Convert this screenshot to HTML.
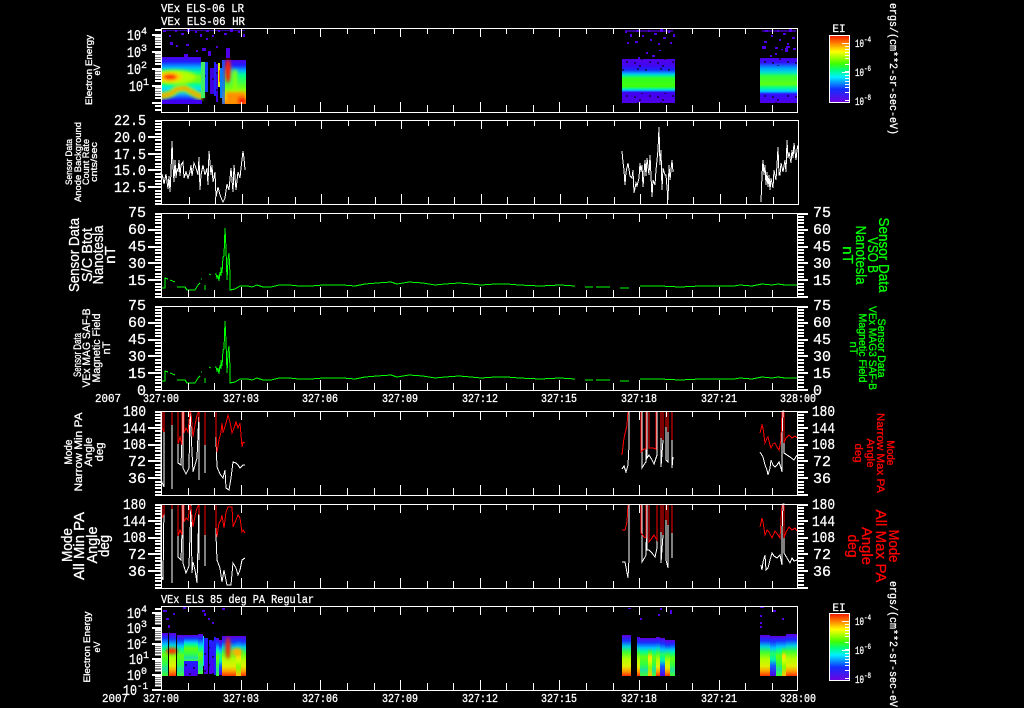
<!DOCTYPE html>
<html><head><meta charset="utf-8"><title>VEx ELS</title>
<style>
html,body{margin:0;padding:0;background:#000;width:1024px;height:708px;overflow:hidden}
svg{display:block}
path{shape-rendering:crispEdges}
text{font-family:"Liberation Sans",sans-serif;fill:#fff;stroke:#fff;stroke-width:.3}
.m{font-family:"Liberation Mono",monospace}
.g{fill:#0f0;stroke:#0f0}
.r{fill:#f00;stroke:#f00}
</style></head><body>
<svg width="1024" height="708" viewBox="0 0 1024 708" xmlns="http://www.w3.org/2000/svg">
<defs>
<linearGradient id="cb" x1="0" y1="0" x2="0" y2="1">
<stop offset="0" stop-color="#f01800"/><stop offset=".1" stop-color="#ff7000"/><stop offset=".24" stop-color="#ffff00"/><stop offset=".42" stop-color="#40ff00"/><stop offset=".52" stop-color="#00ff80"/><stop offset=".62" stop-color="#00f0ff"/><stop offset=".8" stop-color="#1030ff"/><stop offset="1" stop-color="#7000e0"/>
</linearGradient>
<linearGradient id="a1" x1="0" y1="0" x2="0" y2="1">
<stop offset="0" stop-color="#5000e8"/><stop offset=".1" stop-color="#2020ff"/><stop offset=".22" stop-color="#00b0ff"/><stop offset=".32" stop-color="#00ff90"/><stop offset=".42" stop-color="#70ff10"/><stop offset=".52" stop-color="#60ff20"/><stop offset=".6" stop-color="#00ffa0"/><stop offset=".68" stop-color="#00e0ff"/><stop offset=".8" stop-color="#10a0ff"/><stop offset=".9" stop-color="#2020ff"/><stop offset="1" stop-color="#5000e8"/>
</linearGradient>
<linearGradient id="a2" x1="0" y1="0" x2="0" y2="1">
<stop offset="0" stop-color="#5000e8"/><stop offset=".12" stop-color="#2020ff"/><stop offset=".24" stop-color="#00b0ff"/><stop offset=".34" stop-color="#00ff90"/><stop offset=".6" stop-color="#60ff20"/><stop offset=".75" stop-color="#b0ff00"/><stop offset=".88" stop-color="#ffe000"/><stop offset="1" stop-color="#ff8000"/>
</linearGradient>
<linearGradient id="b2" x1="0" y1="0" x2="0" y2="1">
<stop offset="0" stop-color="#5000e8"/><stop offset=".16" stop-color="#4008f0"/><stop offset=".25" stop-color="#1828ff"/><stop offset=".33" stop-color="#00b0ff"/><stop offset=".38" stop-color="#00f0a0"/><stop offset=".44" stop-color="#30ff20"/><stop offset=".63" stop-color="#40ff10"/><stop offset=".67" stop-color="#00ff90"/><stop offset=".71" stop-color="#00c0ff"/><stop offset=".76" stop-color="#4000f0"/><stop offset="1" stop-color="#5000e8"/>
</linearGradient>
<linearGradient id="b3" x1="0" y1="0" x2="0" y2="1">
<stop offset="0" stop-color="#5000e8"/><stop offset=".1" stop-color="#3010f8"/><stop offset=".22" stop-color="#00a0ff"/><stop offset=".32" stop-color="#00e0d0"/><stop offset=".40" stop-color="#30ff40"/><stop offset=".58" stop-color="#60ff10"/><stop offset=".66" stop-color="#00ff90"/><stop offset=".74" stop-color="#00d0ff"/><stop offset=".8" stop-color="#3010ff"/><stop offset="1" stop-color="#5000e8"/>
</linearGradient>
<linearGradient id="c1" x1="0" y1="0" x2="0" y2="1">
<stop offset="0" stop-color="#6000e0"/><stop offset=".12" stop-color="#1830ff"/><stop offset=".26" stop-color="#00c0ff"/><stop offset=".36" stop-color="#00ff90"/><stop offset=".5" stop-color="#60ff10"/><stop offset=".7" stop-color="#30ff40"/><stop offset=".84" stop-color="#20e0a0"/><stop offset="1" stop-color="#40ff30"/>
</linearGradient>
<linearGradient id="c2" x1="0" y1="0" x2="0" y2="1">
<stop offset="0" stop-color="#6000e0"/><stop offset=".14" stop-color="#1830ff"/><stop offset=".28" stop-color="#00d0e0"/><stop offset=".42" stop-color="#40ff30"/><stop offset=".58" stop-color="#b0ff00"/><stop offset=".76" stop-color="#e0f000"/><stop offset=".88" stop-color="#ffa000"/><stop offset="1" stop-color="#ff3000"/>
</linearGradient>
<linearGradient id="c3" x1="0" y1="0" x2="0" y2="1">
<stop offset="0" stop-color="#6000e0"/><stop offset=".14" stop-color="#1830ff"/><stop offset=".3" stop-color="#00c0ff"/><stop offset=".44" stop-color="#20ff60"/><stop offset=".6" stop-color="#00f0b0"/><stop offset=".74" stop-color="#1060ff"/><stop offset="1" stop-color="#5000e8"/>
</linearGradient>
<linearGradient id="c4" x1="0" y1="0" x2="0" y2="1">
<stop offset="0" stop-color="#6000e0"/><stop offset=".12" stop-color="#1830ff"/><stop offset=".26" stop-color="#00c0ff"/><stop offset=".38" stop-color="#40ff20"/><stop offset=".5" stop-color="#ffe000"/><stop offset=".62" stop-color="#d0ff00"/><stop offset=".78" stop-color="#80ff00"/><stop offset="1" stop-color="#ffc000"/>
</linearGradient>
<linearGradient id="c5" x1="0" y1="0" x2="0" y2="1">
<stop offset="0" stop-color="#2020ff"/><stop offset=".4" stop-color="#3010ff"/><stop offset="1" stop-color="#5000e8"/>
</linearGradient>
<pattern id="sp" width="43" height="23" patternUnits="userSpaceOnUse">
<path fill="#5000e8" d="M1 1h3v2h-3zM7 3h2v3h-2zM12 0h4v2h-4zM19 2h3v3h-3zM26 1h2v2h-2zM31 0h4v3h-4zM39 4h3v2h-3zM3 7h2v2h-2zM15 6h3v3h-3zM23 8h2v2h-2zM34 7h3v2h-3zM9 10h3v2h-3zM28 11h2v3h-2zM40 12h2v2h-2zM18 14h3v2h-3zM5 16h2v2h-2zM33 18h3v2h-3zM13 20h2v2h-2zM25 19h2v2h-2z"/>
</pattern>
<pattern id="bk" width="23" height="17" patternUnits="userSpaceOnUse">
<path fill="#000" fill-opacity=".55" d="M1 1h2v2h-2zM9 4h2v2h-2zM16 0h2v2h-2zM20 7h2v2h-2zM5 10h2v2h-2zM13 11h2v2h-2zM18 14h2v2h-2z"/>
</pattern>
<filter id="bl" x="-50%" y="-50%" width="200%" height="200%"><feGaussianBlur stdDeviation="1.6"/></filter>
<clipPath id="cA"><rect x="162" y="57" width="84" height="47"/></clipPath>
<path id="xt" fill="none" stroke="#fff" d="M188.5 0v6M214.5 0v6M267.5 0v6M294.5 0v6M347.5 0v6M374.5 0v6M427.5 0v6M453.5 0v6M506.5 0v6M533.5 0v6M586.5 0v6M613.5 0v6M666.5 0v6M692.5 0v6M745.5 0v6M772.5 0v6M241.5 0v9M320.5 0v9M400.5 0v9M480.5 0v9M559.5 0v9M639.5 0v9M719.5 0v9M188.5 84v-7M214.5 84v-7M267.5 84v-7M294.5 84v-7M347.5 84v-7M374.5 84v-7M427.5 84v-7M453.5 84v-7M506.5 84v-7M533.5 84v-7M586.5 84v-7M613.5 84v-7M666.5 84v-7M692.5 84v-7M745.5 84v-7M772.5 84v-7M241.5 84v-10M320.5 84v-10M400.5 84v-10M480.5 84v-10M559.5 84v-10M639.5 84v-10M719.5 84v-10"/>
<path id="cl" fill="none" stroke="#fff" stroke-width="2" d="M155 1h6M155 4h6M155 7h6M155 10h6M155 14h6M155 20h6M155 24h6M155 27h6M155 30h6M155 37h6M155 40h6M155 44h6M155 47h6M155 54h6M155 57h6M155 61h6M155 64h6M155 71h6M155 74h6M155 77h6M155 81h6M155 84h6M148 17h13M148 34h13M148 50h13M148 67h13"/>
<path id="cr" fill="none" stroke="#fff" stroke-width="2" d="M797 1h7M797 4h7M797 7h7M797 10h7M797 14h7M797 20h7M797 24h7M797 27h7M797 30h7M797 37h7M797 40h7M797 44h7M797 47h7M797 54h7M797 57h7M797 61h7M797 64h7M797 71h7M797 74h7M797 77h7M797 81h7M797 84h7M797 17h11M797 34h11M797 50h11M797 67h11M797 1h11M797 84h11"/>
<path id="dec" fill="none" stroke="#fff" stroke-width="2" d="M152 0h9M155 -5h6M155 -8h6M155 -10.5h6M155 -13h6M155 -15.5h6"/>
<path id="grn" fill="none" stroke="#00ff00" d="M162 288H165V278L168 279M170 280L175 282M177 287H185L187 290H195L198 285 200 283M201 279H202M205 285V290M209 274L211 275M215 274H216L217 278 218 275 219 281 220 272 221 276V267L222 273 223 257 224 256 225 228 226 248 227 280 228 260 229 253 230 275V290L235 289 240 286H248L252 287 257 285 263 287H271L279 285H289L299 286H311L323 285H343L355 286 365 284 377 283 391 282 397 284 409 282 423 283 435 285 445 284 459 283 471 284 481 285 495 284H507L519 285 540 286 560 285 575 286M585 287H593M596 287H610M620 288H629M640 286H660L680 287 700 286H720L734 286 740 285 752 286 762 284 772 285 778 284 785 285 797 285"/>
<g id="cbt"><path fill="none" stroke="#fff" d="M842 8.5h7M845 11.5h4M845 14.5h4M845 17.5h4M845 20.5h4M845 23.5h4M845 29.5h4M845 36.5h4M842 37.5h7M845 40.5h4M845 43.5h4M845 46.5h4M845 49.5h4M845 52.5h4M845 57.5h4M845 65.5h4"/></g>
</defs>

<!-- top titles -->
<text x="161" y="12" font-size="12" textLength="83" lengthAdjust="spacingAndGlyphs" class="m">VEx ELS-06 LR</text>
<text x="161" y="25" font-size="12" textLength="84" lengthAdjust="spacingAndGlyphs" class="m">VEx ELS-06 HR</text>
<text x="161" y="603" font-size="12" textLength="153" lengthAdjust="spacingAndGlyphs" class="m">VEx ELS 85 deg PA Regular</text>

<!-- panel 1 spectrogram -->
<g clip-path="url(#cA)">
<rect x="162" y="57" width="39" height="47" fill="url(#a1)"/>
<g filter="url(#bl)">
<ellipse cx="174" cy="77" rx="22" ry="7" fill="#b0ff00"/>
<ellipse cx="170" cy="77" rx="12" ry="5" fill="#ffd000"/>
<ellipse cx="170" cy="77" rx="7" ry="3" fill="#ff2000"/>
<path style="shape-rendering:auto" d="M160 96L167 95 172 93 177 89 185 88 192 92 197 95 203 97" fill="none" stroke="#a0ff00" stroke-width="7"/>
<path style="shape-rendering:auto" d="M160 96L167 95 172 93 177 89 185 88 192 92 197 95 203 97" fill="none" stroke="#ff8000" stroke-width="3"/>
</g>
<rect x="162" y="100" width="40" height="4" fill="#4000f0"/>
<rect x="201" y="62" width="4" height="36" fill="#40f060"/>
<rect x="205" y="62" width="3" height="30" fill="#1040ff"/>
<rect x="210" y="68" width="4" height="26" fill="#4000e0"/>
<rect x="214" y="62" width="2" height="34" fill="#2020ff"/>
<rect x="216" y="64" width="2" height="38" fill="#4000e0"/>
<rect x="205" y="60" width="13" height="44" fill="url(#bk)"/>
<rect x="218" y="63" width="2" height="24" fill="#e0f000"/>
<rect x="219" y="70" width="1" height="12" fill="#ff4000"/>
<rect x="220" y="68" width="2" height="30" fill="#0080ff"/>
<rect x="222" y="60" width="24" height="44" fill="url(#a2)"/>
<rect x="222" y="60" width="3" height="44" fill="#1060ff" opacity=".8"/>
<g filter="url(#bl)">
<rect x="226" y="92" width="20" height="12" fill="#ff9000"/>
<rect x="238" y="97" width="8" height="7" fill="#ff2000"/>
<ellipse cx="228" cy="71" rx="3" ry="12" fill="#ff2000"/>
<rect x="233" y="70" width="4" height="20" fill="#90ff00"/>
</g>
</g>
<path d="M226 48h4v10h-4zM170 42h3v3h-3zM176 45h2v2h-2zM186 44h3v2h-3zM196 50h2v2h-2zM202 48h4v3h-4zM208 51h3v5h-3zM216 46h2v2h-2zM184 54h4v3h-4zM206 38h2v2h-2z" fill="#5000e8"/>
<rect x="162" y="29" width="84" height="8" fill="url(#sp)"/>
<path d="M163 30h82v1h-82z" fill="#5000e8" opacity=".7"/>
<rect x="622" y="59" width="53" height="44" fill="url(#b2)"/>
<rect x="622" y="59" width="53" height="12" fill="url(#bk)"/>
<rect x="622" y="93" width="53" height="10" fill="url(#bk)"/>
<rect x="623" y="29" width="52" height="16" fill="url(#sp)"/>
<path d="M625 30h48v2h-48z" fill="#5000e8" opacity=".6"/>
<path d="M646 52h2v2h-2zM659 50h2v1h-2zM638 57h2v2h-2zM652 55h3v2h-3z" fill="#5000e8"/>
<rect x="760" y="58" width="37" height="45" fill="url(#b3)"/>
<rect x="760" y="58" width="37" height="8" fill="url(#bk)"/>
<rect x="760" y="94" width="37" height="9" fill="url(#bk)"/>
<rect x="761" y="29" width="36" height="21" fill="url(#sp)"/>
<path d="M762 30h34v2h-34z" fill="#5000e8" opacity=".6"/>
<path d="M785 48h3v4h-3zM770 55h2v2h-2zM775 53h2v2h-2z" fill="#5000e8"/>

<!-- panel 7 spectrogram -->
<rect x="162" y="633" width="6" height="43" fill="url(#c1)"/>
<rect x="169" y="633" width="7" height="43" fill="url(#c2)"/>
<rect x="177" y="635" width="7" height="41" fill="url(#c1)"/>
<rect x="184" y="635" width="14" height="27" fill="url(#c1)"/>
<rect x="184" y="661" width="14" height="15" fill="url(#c5)"/>
<rect x="184" y="661" width="14" height="15" fill="url(#bk)"/>
<rect x="198" y="634" width="5" height="40" fill="url(#c1)"/>
<rect x="203" y="636" width="1" height="30" fill="#00d0ff"/>
<rect x="204" y="638" width="4" height="36" fill="url(#c5)"/>
<rect x="209" y="640" width="5" height="34" fill="url(#c5)"/>
<rect x="204" y="638" width="10" height="36" fill="url(#bk)"/>
<rect x="214" y="637" width="2" height="38" fill="#2020ff"/>
<rect x="216" y="638" width="3" height="38" fill="url(#c1)"/>
<rect x="219" y="640" width="3" height="35" fill="url(#c3)"/>
<rect x="222" y="636" width="14" height="40" fill="url(#c2)"/>
<rect x="236" y="636" width="5" height="40" fill="url(#c4)"/>
<rect x="241" y="636" width="5" height="40" fill="url(#c2)"/>
<g filter="url(#bl)">
<ellipse cx="172" cy="651" rx="6" ry="3" fill="#ff3000"/>
<ellipse cx="228" cy="648" rx="2.5" ry="11" fill="#ff2000"/>
<ellipse cx="237" cy="652" rx="5" ry="4" fill="#ffb000"/>
</g>
<rect x="168" y="635" width="1" height="41" fill="#000"/>
<rect x="176" y="634" width="1" height="42" fill="#000"/>
<path d="M163 610h4v2h-4zM168 625h2v3h-2zM166 618h3v2h-3zM173 613h2v2h-2zM183 607h3v2h-3zM202 610h3v2h-3zM204 613h2v3h-2zM208 618h2v2h-2zM212 622h2v2h-2zM222 608h3v2h-3z" fill="#5000e8"/>
<rect x="622" y="635" width="9" height="41" fill="url(#c2)"/>
<rect x="637" y="637" width="3" height="39" fill="url(#c2)"/>
<rect x="640" y="638" width="8" height="38" fill="url(#c1)"/>
<rect x="648" y="638" width="4" height="38" fill="url(#c4)"/>
<rect x="652" y="638" width="4" height="38" fill="url(#c1)"/>
<rect x="656" y="637" width="4" height="39" fill="url(#c2)"/>
<rect x="660" y="638" width="5" height="38" fill="url(#c3)"/>
<rect x="665" y="640" width="5" height="36" fill="url(#c2)"/>
<rect x="670" y="640" width="5" height="36" fill="url(#c1)"/>
<rect x="760" y="635" width="10" height="41" fill="url(#c2)"/>
<rect x="770" y="636" width="6" height="40" fill="url(#c3)"/>
<rect x="776" y="636" width="6" height="40" fill="url(#c1)"/>
<rect x="782" y="636" width="4" height="40" fill="url(#c4)"/>
<rect x="786" y="634" width="11" height="42" fill="url(#c2)"/>
<path d="M628 608h3v1h-3zM640 618h2v2h-2zM658 614h2v2h-2zM660 608h2v2h-2zM670 610h2v4h-2zM760 607h4v1h-4zM760 615h2v2h-2zM760 622h2v2h-2zM760 626h2v2h-2zM773 610h3v2h-3zM782 618h2v2h-2z" fill="#5000e8"/>

<!-- panel 2 line -->
<path fill="none" stroke="#fff" d="M161 172L163 178 164 184 166 174 168 189 169 176 170 192 171 172 172 141 173 165 174 182 175 160 176 178 177 168 178 172 179 160 180 176 181 165 183 162 184 178 186 172 188 178 190 172 191 165 192 176 194 163 196 168 198 175 199 157 200 190 201 175 203 165 205 175 207 168 208 185 209 151 211 175 212 165 213 182 215 172 216 197 218 187 220 195 222 200 223 202 225 198 227 184 229 190 231 168 233 192 234 165 236 190 238 172 240 178 241 168 243 151 244 158 245 170"/>
<path fill="none" stroke="#fff" d="M622 151L623 162 624 170 625 185 626 172 628 163 630 176 632 178 633 170 634 193 636 183 637 186 639 178 640 163 641 172 642 165 643 187 645 160 646 176 647 158 649 175 650 155 652 197 653 180 655 185 656 170 658 150 659 127 660 165 661 150 662 190 663 168 665 175 666 175 668 200 669 165 670 180 671 170 672 160 673 172"/>
<path fill="none" stroke="#fff" d="M761 202L762 175 763 160 764 175 765 165 766 185 767 172 768 187 769 175 770 190 771 178 773 188 774 170 776 180 777 165 778 147 779 175 780 175 781 163 783 172 785 160 786 172 787 140 788 158 789 152 791 163 792 150 793 158 794 143 796 160 797 150 798 145"/>

<!-- green lines -->
<use href="#grn"/>
<use href="#grn" transform="translate(0,93)"/>

<!-- panel 5 white/red -->
<path fill="none" stroke="#fff" d="M161 411V480L164 487V411M172 411V489M178 411V463L181 465 183 411V468L186 474 189 468 190 411 193 472 197 458 199 411V480M205 411V473M216 411V440L217 467 220 474 223 478 225 470 226 488 229 490 231 478 233 462 236 463 238 465 240 468 243 465 245 465"/>
<path fill="none" stroke="#f00" d="M162 411V428L164 432V411M172 411V425M178 411V444L180 437 182 445V411M184 411V433L186 428 188 432 190 411 191 413 193 437 195 425 197 415 199 411V422M205 411V445M216 411V432L217 452 219 440 221 432 222 423 223 433 226 423 228 415 230 422 232 433 234 428 236 422 238 428 240 423 242 447 243 442 245 443"/>
<path fill="none" stroke="#fff" d="M622 469L624 466 626 472 628 465 629 445V411M642 411V468L645 463 646 462 647 411V458L649 455 652 460 654 464 657 455V411M661 411V467L663 440V411M666 411V460L668 462V411M672 411V468L673 457"/>
<path fill="none" stroke="#f00" d="M622 455L624 438 627 425 628 411M641 411V452L644 449 646 449V411M649 411V448L653 448 656 449V411M661 411V438M663 411V440M666 411V427M668 411V432M672 411V440"/>
<path fill="none" stroke="#fff" d="M760 452L763 457 765 465 767 470 768 475 770 468 771 460 773 465 775 467 777 465 779 462 781 468 782 472V438L783 411 784 411V453L787 455 790 457 794 460 797 455"/>
<path fill="none" stroke="#f00" d="M760 433L762 425 763 428 765 443 767 438 768 437 770 445 771 448 773 444 775 443 777 447 779 450 781 440 782 411M784 411V443L786 438 789 435 792 438 795 436 797 438"/>

<!-- panel 6 white/red -->
<path fill="none" stroke="#fff" d="M161 504V575L163 580 164 504M172 504V583M178 504V557L181 560 183 504V563L186 573 189 566 191 504 192 573 193 562 195 570 197 583 199 504V560M205 504V566M216 504V535L217 560 220 568 222 582 224 570 227 585 231 585 233 563 236 568 238 575 240 570 242 560 245 558"/>
<path fill="none" stroke="#f00" d="M162 504V518L164 514V504M172 504V509M178 504V536L180 530 182 535V504M184 504V522L186 518 188 520 190 504 191 507 193 527 195 516 197 508 199 504V515M205 504V535M216 504V525L217 537 219 523 221 520 222 515 224 528 226 512 228 507 232 507 233 527 236 520 238 515 240 518 242 532 243 530 245 533"/>
<path fill="none" stroke="#fff" d="M622 562L625 562 628 578 629 558V504M642 504V562L645 557 646 555 647 504V550L649 550 652 553 655 557 657 548V504M661 504V563L663 535V504M666 504V560L668 568V504M672 504V558"/>
<path fill="none" stroke="#f00" d="M622 530L625 530 627 522 628 504M641 504V533L644 537 646 538V504M649 504V542L652 538 654 535 657 540V504M661 504V532M663 504V535M666 504V520M668 504V525M672 504V533"/>
<path fill="none" stroke="#fff" d="M761 565L762 570 763 562 765 555 766 570 768 568 770 560 772 553 774 556 777 558 780 555 782 565V534L783 504 784 504V553L787 558 790 563 792 558 794 561 797 560"/>
<path fill="none" stroke="#f00" d="M760 527L762 518 763 522 765 535 767 530 769 532 772 538 775 531 778 535 780 538 782 504M784 504V538L786 532 789 527 792 530 795 528 797 531"/>

<!-- frames -->
<g fill="none" stroke="#fff">
<rect x="161.5" y="28.5" width="636" height="84"/>
<rect x="161.5" y="120.5" width="637" height="84"/>
<rect x="161.5" y="213.5" width="636" height="84"/>
<rect x="161.5" y="306.5" width="636" height="84"/>
<rect x="161.5" y="411.5" width="636" height="84"/>
<rect x="161.5" y="504.5" width="636" height="84"/>
<rect x="161.5" y="606.5" width="636" height="84"/>
</g>
<use href="#xt" transform="translate(0,28)"/><use href="#xt" transform="translate(1,120)"/><use href="#xt" transform="translate(0,213)"/><use href="#xt" transform="translate(0,306)"/><use href="#xt" transform="translate(0,411)"/><use href="#xt" transform="translate(0,504)"/><use href="#xt" transform="translate(0,606)"/>

<!-- y ticks -->
<use href="#cl" transform="translate(0,120)"/><use href="#cl" transform="translate(0,213)"/><use href="#cl" transform="translate(0,306)"/><use href="#cl" transform="translate(0,411)"/><use href="#cl" transform="translate(0,504)"/>
<use href="#cr" transform="translate(0,213)"/><use href="#cr" transform="translate(0,306)"/><use href="#cr" transform="translate(0,411)"/><use href="#cr" transform="translate(0,504)"/>
<use href="#dec" transform="translate(0,52)"/><use href="#dec" transform="translate(0,69)"/><use href="#dec" transform="translate(0,86)"/><use href="#dec" transform="translate(0,103)"/>
<path fill="none" stroke="#fff" stroke-width="2" d="M152 35h9M155 30h6M155 106h6M155 110h6"/>
<use href="#dec" transform="translate(0,628) scale(1,.9)"/><use href="#dec" transform="translate(0,644) scale(1,.9)"/><use href="#dec" transform="translate(0,659) scale(1,.9)"/><use href="#dec" transform="translate(0,675) scale(1,.9)"/><use href="#dec" transform="translate(0,690) scale(1,.9)"/>
<path fill="none" stroke="#fff" stroke-width="2" d="M152 613h9M155 609h6"/>

<!-- left y labels -->
<g font-size="15" text-anchor="end">
<text x="146" y="125" textLength="32" lengthAdjust="spacingAndGlyphs" class="m">22.5</text>
<text x="146" y="142" textLength="32" lengthAdjust="spacingAndGlyphs" class="m">20.0</text>
<text x="146" y="159" textLength="32" lengthAdjust="spacingAndGlyphs" class="m">17.5</text>
<text x="146" y="175" textLength="32" lengthAdjust="spacingAndGlyphs" class="m">15.0</text>
<text x="146" y="192" textLength="32" lengthAdjust="spacingAndGlyphs" class="m">12.5</text>
<text x="146" y="217" class="m">75</text><text x="146" y="234" class="m">60</text><text x="146" y="251" class="m">45</text><text x="146" y="268" class="m">30</text><text x="146" y="285" class="m">15</text>
<text x="146" y="310" class="m">75</text><text x="146" y="327" class="m">60</text><text x="146" y="344" class="m">45</text><text x="146" y="361" class="m">30</text><text x="146" y="378" class="m">15</text><text x="146" y="395" class="m">0</text>
<text x="146" y="416" class="m" textLength="23" lengthAdjust="spacingAndGlyphs">180</text><text x="146" y="433" class="m" textLength="23" lengthAdjust="spacingAndGlyphs">144</text><text x="146" y="449" class="m" textLength="23" lengthAdjust="spacingAndGlyphs">108</text><text x="146" y="466" class="m">72</text><text x="146" y="483" class="m">36</text>
<text x="146" y="509" class="m" textLength="23" lengthAdjust="spacingAndGlyphs">180</text><text x="146" y="526" class="m" textLength="23" lengthAdjust="spacingAndGlyphs">144</text><text x="146" y="542" class="m" textLength="23" lengthAdjust="spacingAndGlyphs">108</text><text x="146" y="559" class="m">72</text><text x="146" y="576" class="m">36</text>
</g>
<g font-size="15">
<text x="127" y="40" class="m" textLength="14" lengthAdjust="spacingAndGlyphs">10</text><text x="141" y="34" font-size="10" class="m">4</text>
<text x="127" y="57" class="m" textLength="14" lengthAdjust="spacingAndGlyphs">10</text><text x="141" y="51" font-size="10" class="m">3</text>
<text x="127" y="74" class="m" textLength="14" lengthAdjust="spacingAndGlyphs">10</text><text x="141" y="68" font-size="10" class="m">2</text>
<text x="129" y="91" class="m" textLength="14" lengthAdjust="spacingAndGlyphs">10</text><text x="143" y="85" font-size="10" class="m">1</text>
<text x="127" y="618" class="m" textLength="14" lengthAdjust="spacingAndGlyphs">10</text><text x="141" y="612" font-size="10" class="m">4</text>
<text x="127" y="633" class="m" textLength="14" lengthAdjust="spacingAndGlyphs">10</text><text x="141" y="627" font-size="10" class="m">3</text>
<text x="127" y="649" class="m" textLength="14" lengthAdjust="spacingAndGlyphs">10</text><text x="141" y="643" font-size="10" class="m">2</text>
<text x="129" y="664" class="m" textLength="14" lengthAdjust="spacingAndGlyphs">10</text><text x="143" y="658" font-size="10" class="m">1</text>
<text x="127" y="680" class="m" textLength="14" lengthAdjust="spacingAndGlyphs">10</text><text x="141" y="674" font-size="10" class="m">0</text>
<text x="123" y="695" class="m" textLength="14" lengthAdjust="spacingAndGlyphs">10</text><text x="137" y="689" font-size="10" class="m" textLength="11" lengthAdjust="spacingAndGlyphs">-1</text>
</g>

<!-- right y labels -->
<g font-size="15">
<text x="813" y="217" class="m">75</text><text x="813" y="234" class="m">60</text><text x="813" y="251" class="m">45</text><text x="813" y="268" class="m">30</text><text x="813" y="285" class="m">15</text>
<text x="813" y="310" class="m">75</text><text x="813" y="327" class="m">60</text><text x="813" y="344" class="m">45</text><text x="813" y="361" class="m">30</text><text x="813" y="378" class="m">15</text><text x="813" y="395" class="m">0</text>
<text x="812" y="416" class="m" textLength="23" lengthAdjust="spacingAndGlyphs">180</text><text x="812" y="433" class="m" textLength="23" lengthAdjust="spacingAndGlyphs">144</text><text x="812" y="449" class="m" textLength="23" lengthAdjust="spacingAndGlyphs">108</text><text x="813" y="466" class="m">72</text><text x="813" y="483" class="m">36</text>
<text x="812" y="509" class="m" textLength="23" lengthAdjust="spacingAndGlyphs">180</text><text x="812" y="526" class="m" textLength="23" lengthAdjust="spacingAndGlyphs">144</text><text x="812" y="542" class="m" textLength="23" lengthAdjust="spacingAndGlyphs">108</text><text x="813" y="559" class="m">72</text><text x="813" y="576" class="m">36</text>
</g>

<!-- time labels -->
<g font-size="12" text-anchor="middle">
<text x="108" y="402" textLength="26" lengthAdjust="spacingAndGlyphs" class="m">2007</text>
<text x="161" y="402" textLength="36" lengthAdjust="spacingAndGlyphs" class="m">327:00</text><text x="241" y="402" textLength="36" lengthAdjust="spacingAndGlyphs" class="m">327:03</text><text x="320" y="402" textLength="36" lengthAdjust="spacingAndGlyphs" class="m">327:06</text><text x="400" y="402" textLength="36" lengthAdjust="spacingAndGlyphs" class="m">327:09</text><text x="480" y="402" textLength="36" lengthAdjust="spacingAndGlyphs" class="m">327:12</text><text x="559" y="402" textLength="36" lengthAdjust="spacingAndGlyphs" class="m">327:15</text><text x="639" y="402" textLength="36" lengthAdjust="spacingAndGlyphs" class="m">327:18</text><text x="719" y="402" textLength="36" lengthAdjust="spacingAndGlyphs" class="m">327:21</text><text x="798" y="402" textLength="36" lengthAdjust="spacingAndGlyphs" class="m">328:00</text>
<text x="115" y="702" textLength="26" lengthAdjust="spacingAndGlyphs" class="m">2007</text>
<text x="161" y="702" textLength="36" lengthAdjust="spacingAndGlyphs" class="m">327:00</text><text x="241" y="702" textLength="36" lengthAdjust="spacingAndGlyphs" class="m">327:03</text><text x="320" y="702" textLength="36" lengthAdjust="spacingAndGlyphs" class="m">327:06</text><text x="400" y="702" textLength="36" lengthAdjust="spacingAndGlyphs" class="m">327:09</text><text x="480" y="702" textLength="36" lengthAdjust="spacingAndGlyphs" class="m">327:12</text><text x="559" y="702" textLength="36" lengthAdjust="spacingAndGlyphs" class="m">327:15</text><text x="639" y="702" textLength="36" lengthAdjust="spacingAndGlyphs" class="m">327:18</text><text x="719" y="702" textLength="36" lengthAdjust="spacingAndGlyphs" class="m">327:21</text><text x="798" y="702" textLength="36" lengthAdjust="spacingAndGlyphs" class="m">328:00</text>
</g>

<!-- left rotated labels -->
<g text-anchor="middle">
<g font-size="9">
<text transform="translate(92,70) rotate(-90)" textLength="70" lengthAdjust="spacingAndGlyphs">Electron Energy</text>
<text transform="translate(100,70) rotate(-90)">eV</text>
<text transform="translate(72,162) rotate(-90)" textLength="46" lengthAdjust="spacingAndGlyphs">Sensor Data</text>
<text transform="translate(81,162) rotate(-90)" textLength="80" lengthAdjust="spacingAndGlyphs">Anode Background</text>
<text transform="translate(89,162) rotate(-90)" textLength="46" lengthAdjust="spacingAndGlyphs">Count Rate</text>
<text transform="translate(97,162) rotate(-90)" textLength="40" lengthAdjust="spacingAndGlyphs">cnts/sec</text>
<text transform="translate(90,647) rotate(-90)" textLength="71" lengthAdjust="spacingAndGlyphs">Electron Energy</text>
<text transform="translate(100,647) rotate(-90)">eV</text>
</g>
<g font-size="15">
<text transform="translate(79,255) rotate(-90)" textLength="74" lengthAdjust="spacingAndGlyphs">Sensor Data</text>
<text transform="translate(92,255) rotate(-90)" textLength="54" lengthAdjust="spacingAndGlyphs">S/C Btot</text>
<text transform="translate(103,255) rotate(-90)" textLength="59" lengthAdjust="spacingAndGlyphs">Nanotesla</text>
<text transform="translate(115,255) rotate(-90)">nT</text>
<text transform="translate(72,545) rotate(-90)" textLength="34" lengthAdjust="spacingAndGlyphs">Mode</text>
<text transform="translate(84,546) rotate(-90)" textLength="68" lengthAdjust="spacingAndGlyphs">All Min PA</text>
<text transform="translate(97,545) rotate(-90)" textLength="37" lengthAdjust="spacingAndGlyphs">Angle</text>
<text transform="translate(109,546) rotate(-90)" textLength="22" lengthAdjust="spacingAndGlyphs">deg</text>
</g>
<g font-size="11">
<text transform="translate(81,355) rotate(-90)" textLength="44" lengthAdjust="spacingAndGlyphs">Sensor Data</text>
<text transform="translate(90,348) rotate(-90)" textLength="79" lengthAdjust="spacingAndGlyphs">VEx MAG SAF-B</text>
<text transform="translate(100,348) rotate(-90)" textLength="69" lengthAdjust="spacingAndGlyphs">Magnetic Field</text>
<text transform="translate(110,348) rotate(-90)">nT</text>
<text transform="translate(72,452) rotate(-90)" textLength="25" lengthAdjust="spacingAndGlyphs">Mode</text>
<text transform="translate(82,452) rotate(-90)" textLength="79" lengthAdjust="spacingAndGlyphs">Narrow Min PA</text>
<text transform="translate(92,452) rotate(-90)" textLength="29" lengthAdjust="spacingAndGlyphs">Angle</text>
<text transform="translate(103,452) rotate(-90)" textLength="19" lengthAdjust="spacingAndGlyphs">deg</text>
</g>
</g>

<!-- right rotated labels -->
<g text-anchor="middle">
<g font-size="15">
<text class="g" transform="translate(879,255) rotate(90)" textLength="75" lengthAdjust="spacingAndGlyphs">Sensor Data</text>
<text class="g" transform="translate(868,255) rotate(90)" textLength="36" lengthAdjust="spacingAndGlyphs">VSO  B</text>
<text class="g" transform="translate(856,255) rotate(90)" textLength="59" lengthAdjust="spacingAndGlyphs">Nanotesla</text>
<text class="g" transform="translate(843,255) rotate(90)">nT</text>
</g>
<g font-size="11">
<text class="g" transform="translate(878,348) rotate(90)" textLength="59" lengthAdjust="spacingAndGlyphs">Sensor Data</text>
<text class="g" transform="translate(869,348) rotate(90)" textLength="84" lengthAdjust="spacingAndGlyphs">VEx MAG3 SAF-B</text>
<text class="g" transform="translate(859,348) rotate(90)" textLength="69" lengthAdjust="spacingAndGlyphs">Magnetic Field</text>
<text class="g" transform="translate(850,348) rotate(90)">nT</text>
</g>
<g font-size="11">
<text class="r" transform="translate(887,453) rotate(90)" textLength="25" lengthAdjust="spacingAndGlyphs">Mode</text>
<text class="r" transform="translate(877,453) rotate(90)" textLength="80" lengthAdjust="spacingAndGlyphs">Narrow Max PA</text>
<text class="r" transform="translate(867,453) rotate(90)" textLength="29" lengthAdjust="spacingAndGlyphs">Angle</text>
<text class="r" transform="translate(855,453) rotate(90)" textLength="19" lengthAdjust="spacingAndGlyphs">deg</text>
</g>
<g font-size="15">
<text class="r" transform="translate(889,546) rotate(90)" textLength="33" lengthAdjust="spacingAndGlyphs">Mode</text>
<text class="r" transform="translate(876,546) rotate(90)" textLength="73" lengthAdjust="spacingAndGlyphs">All  Max PA</text>
<text class="r" transform="translate(862,546) rotate(90)" textLength="38" lengthAdjust="spacingAndGlyphs">Angle</text>
<text class="r" transform="translate(848,546) rotate(90)" textLength="23" lengthAdjust="spacingAndGlyphs">deg</text>
</g>
</g>

<!-- colour bars -->
<rect x="829.5" y="35.5" width="20" height="67" fill="url(#cb)" stroke="#fff"/>
<rect x="829.5" y="613.5" width="20" height="67" fill="url(#cb)" stroke="#fff"/>
<use href="#cbt" transform="translate(0,35)"/><use href="#cbt" transform="translate(0,613)"/>
<g text-anchor="middle">
<text x="839" y="32" font-size="11" class="m">EI</text><text x="839" y="611" font-size="11" class="m">EI</text>
</g>
<g font-size="11">
<text x="855" y="47" class="m" textLength="9" lengthAdjust="spacingAndGlyphs">10</text><text x="864" y="42" font-size="8" class="m" textLength="7" lengthAdjust="spacingAndGlyphs">-4</text>
<text x="855" y="76" class="m" textLength="9" lengthAdjust="spacingAndGlyphs">10</text><text x="864" y="71" font-size="8" class="m" textLength="7" lengthAdjust="spacingAndGlyphs">-6</text>
<text x="855" y="105" class="m" textLength="9" lengthAdjust="spacingAndGlyphs">10</text><text x="864" y="100" font-size="8" class="m" textLength="7" lengthAdjust="spacingAndGlyphs">-8</text>
<text x="855" y="625" class="m" textLength="9" lengthAdjust="spacingAndGlyphs">10</text><text x="864" y="620" font-size="8" class="m" textLength="7" lengthAdjust="spacingAndGlyphs">-4</text>
<text x="855" y="654" class="m" textLength="9" lengthAdjust="spacingAndGlyphs">10</text><text x="864" y="649" font-size="8" class="m" textLength="7" lengthAdjust="spacingAndGlyphs">-6</text>
<text x="855" y="683" class="m" textLength="9" lengthAdjust="spacingAndGlyphs">10</text><text x="864" y="678" font-size="8" class="m" textLength="7" lengthAdjust="spacingAndGlyphs">-8</text>
</g>
<text transform="translate(890,3) rotate(90)" font-size="11" textLength="132" lengthAdjust="spacingAndGlyphs" class="m">ergs/(cm**2-sr-sec-eV)</text>
<text transform="translate(890,581) rotate(90)" font-size="11" textLength="132" lengthAdjust="spacingAndGlyphs" class="m">ergs/(cm**2-sr-sec-eV)</text>
</svg>
</body></html>
